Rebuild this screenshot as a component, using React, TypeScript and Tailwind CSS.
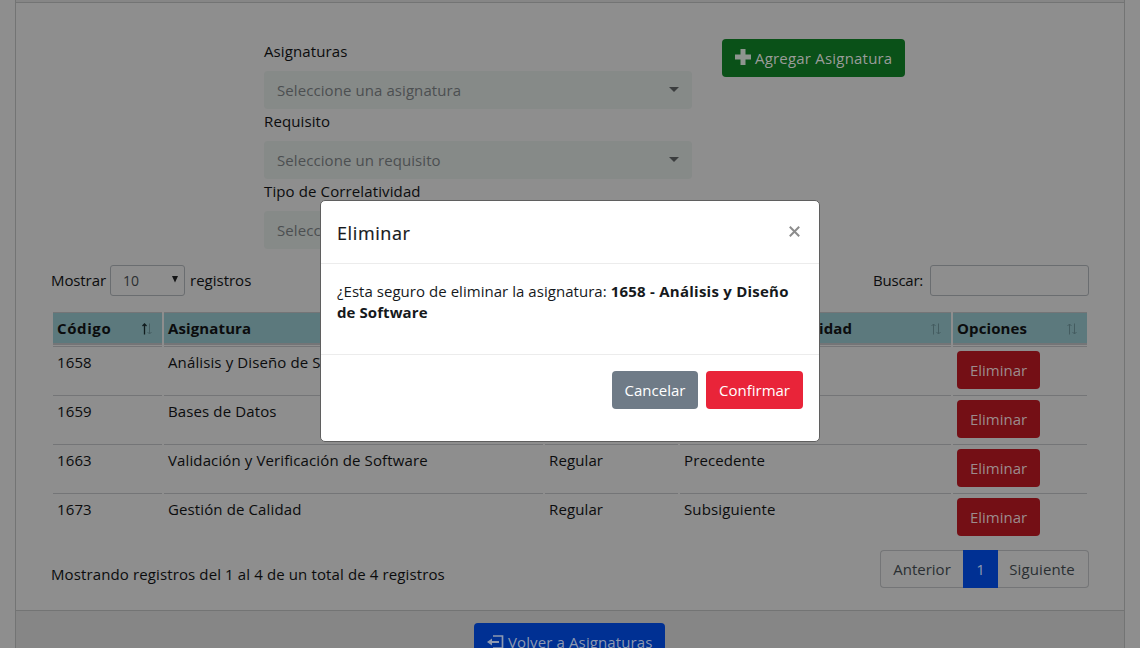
import React from 'react';

type Row = { code: string; name: string; req: string; kind: string };

const rows: Row[] = [
  { code: '1658', name: 'Análisis y Diseño de Software', req: 'Regular', kind: 'Precedente' },
  { code: '1659', name: 'Bases de Datos', req: 'Regular', kind: 'Precedente' },
  { code: '1663', name: 'Validación y Verificación de Software', req: 'Regular', kind: 'Precedente' },
  { code: '1673', name: 'Gestión de Calidad', req: 'Regular', kind: 'Subsiguiente' },
];

const columns = ['Código', 'Asignatura', 'Requisito', 'Tipo de Correlatividad', 'Opciones'];

const grid = 'grid grid-cols-[109px_379px_133px_271px_134px] gap-x-[2px]';

function Field({ label, placeholder }: { label: string; placeholder: string }) {
  return (
    <div className="h-[70px]">
      <div className="h-[38px] pt-[7px] leading-[22px]">{label}</div>
      <div className="flex h-[38px] items-center justify-between rounded bg-[#868a88] pl-[13px] pr-[13px] text-[#4c4f51]">
        <span className="tracking-[0.08px]">{placeholder}</span>
        <svg width="10" height="5" viewBox="0 0 10 5" className="-mt-px">
          <path d="M0 0h10L5 5z" fill="#3b3d3e" />
        </svg>
      </div>
    </div>
  );
}

function SortIcon({ active }: { active?: boolean }) {
  return (
    <svg width="12" height="12" viewBox="0 0 12 12" fill="none" className="mt-[2px] shrink-0">
      <path d="M3.5 11.5V1M1.5 3L3.5 1L5.500 3" stroke={active ? '#111c1e' : '#445c60'} strokeWidth={active ? 1.3 : 1} />
      <path d="M8.5 0.5V11M6.5 9L8.5 11L10.500 9" stroke="#445c60" />
    </svg>
  );
}

export default function App() {
  return (
    <div className="relative h-[648px] w-[1140px] overflow-hidden bg-[#8e8e8e] px-[15px] font-['Open_Sans','Noto_Sans',sans-serif] text-[15px] tracking-[0.12px] text-[#0b0c0d]">
      <div className="h-[648px] border-x border-[#737474]">
        <div className="h-[3px] border-b border-[#737474] bg-[#868686]" />
        <div className="flex h-[262px] pl-[248px] pt-[30px]">
          <div className="w-[428px]">
            <Field label="Asignaturas" placeholder="Seleccione una asignatura" />
            <Field label="Requisito" placeholder="Seleccione un requisito" />
            <Field label="Tipo de Correlatividad" placeholder="Seleccione un tipo" />
          </div>
          <button className="ml-[30px] mt-[6px] flex h-[38px] w-[183px] items-center rounded bg-[#0a5118] pl-[13px] tracking-[0.2px] text-[#9a9c9a]">
            <svg width="16" height="16" viewBox="0 0 16 16" className="-mt-[3px] mr-[4px]">
              <path d="M5.5 0h5v5.5H16v5h-5.5V16h-5v-5.500H0v-5h5.500z" fill="#8e958f" />
            </svg>
            Agregar Asignatura
          </button>
        </div>

        <div className="flex h-[31px] items-center pl-[35px] pr-[35px] tracking-normal">
          <span className="w-[59px] tracking-[-0.1px]">Mostrar</span>
          <div className="flex h-[31px] w-[75px] items-center justify-between rounded-[3px] border border-[#6a6d70] pl-[12px] pr-[5px] text-[14px] text-[#2b2e31]">
            <span>10</span>
            <svg width="8" height="7" viewBox="0 0 8 7" className="-mt-[3px]">
              <path d="M1 0h6L4 6.500z" fill="#141516" />
            </svg>
          </div>
          <span className="ml-[5px]">registros</span>
          <span className="ml-auto mr-[7px] tracking-[-0.25px]">Buscar:</span>
          <div className="h-[31px] w-[159px] rounded-[3px] border border-[#6a6d70]" />
        </div>

        <div className="pl-[37px] pt-[16px]">
          <div className={grid}>
            {columns.map((c, i) => (
              <div key={c} className="flex h-[33px] items-center justify-between border-b-2 border-t border-b-[#747577] border-t-[#747577] bg-[#5c797d] pl-[4px] pr-[9px] font-bold">
                <span className={i === 0 ? 'tracking-[0.6px]' : ''}>{c}</span>
                <SortIcon active={i === 0} />
              </div>
            ))}
          </div>
          <div className="h-px" />
          {rows.map((r) => (
            <div key={r.code} className={grid}>
              {[r.code, r.name, r.req, r.kind].map((t, i) => (
                <div key={i} className="h-[49px] whitespace-nowrap border-t border-[#747577] pl-[4px] pt-[4px] leading-[22px]">
                  {t}
                </div>
              ))}
              <div className="h-[49px] border-t border-[#747577] pl-[4px] pt-[4px]">
                <button className="h-[38px] w-[83px] rounded bg-[#740f15] tracking-normal text-[#9c8c8d]">Eliminar</button>
              </div>
            </div>
          ))}
        </div>

        <div className="flex h-[69px] justify-between border-b border-[#737474] pl-[35px] pr-[35px] pt-[8px]">
          <span className="pt-[5px] leading-[38px]">Mostrando registros del 1 al 4 de un total de 4 registros</span>
          <div className="flex h-[38px] text-center leading-[36px] tracking-normal text-[#2a2e32]">
            <span className="w-[83px] rounded-l border border-r-0 border-[#747577]">Anterior</span>
            <span className="w-[35px] bg-[#003093] leading-[38px] text-[#8e99b0]">1</span>
            <span className="w-[91px] rounded-r border border-l-0 border-[#747577] pr-[2px] tracking-[0.12px]">Siguiente</span>
          </div>
        </div>
        <div className="flex h-[60px] bg-[#868686] pl-[458px] pt-[12px]">
          <button className="flex h-[38px] w-[191px] items-center whitespace-nowrap rounded bg-[#003093] pl-[13px] tracking-[0.12px] text-[#8e99b0]">
            <svg width="17" height="14" viewBox="0 0 17 14" fill="none" className="mr-[4px]">
              <path d="M6 1H15.500V13H6" stroke="#8e99b0" strokeWidth="1.700" />
              <path d="M12 7H3" stroke="#8e99b0" strokeWidth="2" />
              <path d="M0 7L5 3.500V10.500z" fill="#8e99b0" />
            </svg>
            Volver a Asignaturas
          </button>
        </div>
      </div>

      <div className="absolute left-[320px] top-[200px] h-[242px] w-[500px] rounded-[5px] border border-[#5f5f5f] bg-white text-[#16191c]">
        <div className="flex h-[63px] items-center justify-between border-b border-[#ececec] px-[16px]">
          <h5 className="mt-[2px] text-[18px] font-medium tracking-[0.6px] [-webkit-text-stroke:0.2px_#16191c]">Eliminar</h5>
          <svg width="11" height="11" viewBox="0 0 11 11" className="mr-[3px] -mt-px">
            <path d="M0.800 0.800L10.200 10.200M10.200 0.800L0.800 10.200" stroke="#8c8c8c" strokeWidth="2" />
          </svg>
        </div>
        <div className="h-[91px] whitespace-nowrap border-b border-[#ececec] px-[16px] pt-[17px] leading-[21px] tracking-[0.04px]">
          ¿Esta seguro de eliminar la asignatura: <b className="tracking-[0.24px]">1658 - Análisis y Diseño<br /><span className="tracking-[0.08px]">de Software</span></b>
        </div>
        <div className="flex justify-end gap-2 pr-[16px] pt-[16px] tracking-normal text-white">
          <button className="h-[38px] w-[86px] rounded bg-[#6f7b87]">Cancelar</button>
          <button className="h-[38px] w-[97px] rounded bg-[#e92439]">Confirmar</button>
        </div>
      </div>
    </div>
  );
}
